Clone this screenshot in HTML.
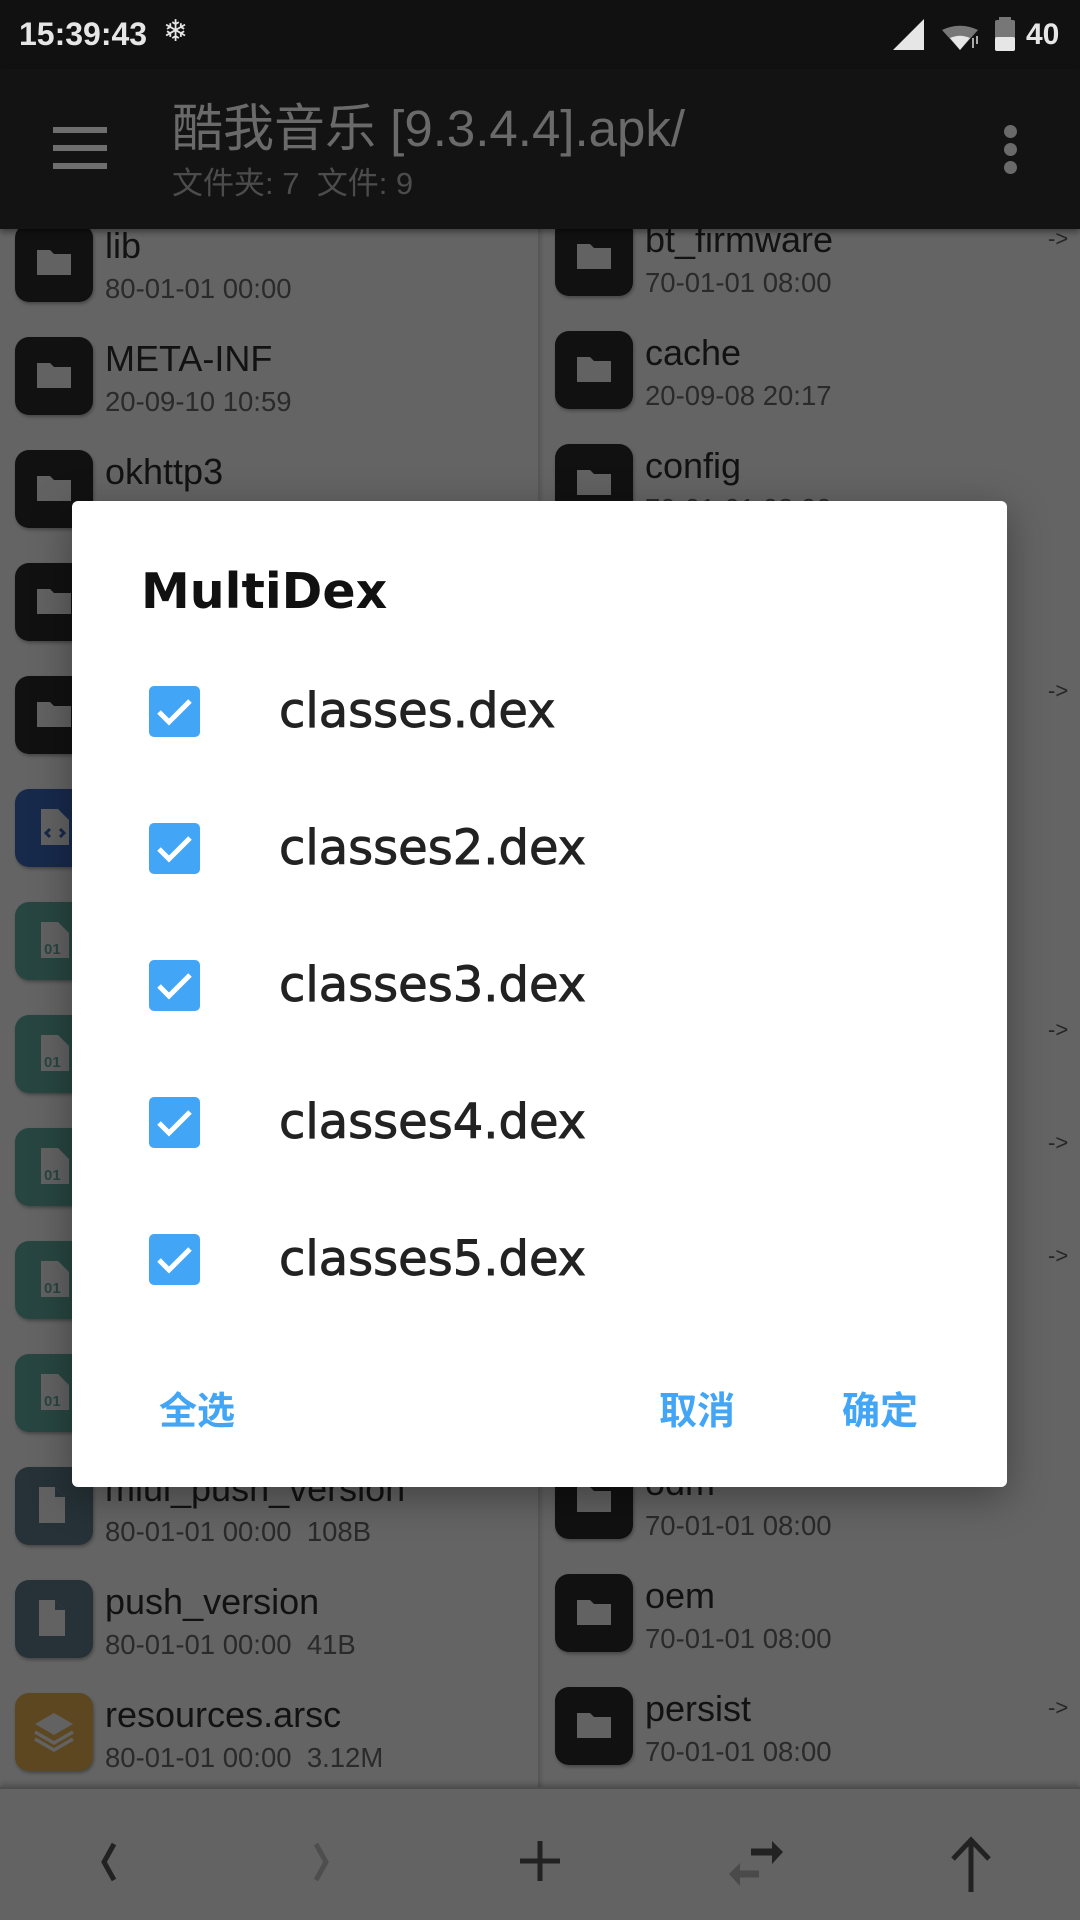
<!DOCTYPE html>
<html><head><meta charset="utf-8"><style>
*{margin:0;padding:0;box-sizing:border-box}
body{width:1080px;height:1920px;overflow:hidden;background:#646464;font-family:"Liberation Sans","Noto Sans CJK SC",sans-serif;position:relative}
.abs{position:absolute}
.ic{position:absolute;width:78px;height:78px;border-radius:14px;box-shadow:1px 2px 3px rgba(0,0,0,.3)}
.ic svg{position:absolute;left:0;top:0}
.t{position:absolute;font-size:36px;line-height:40px;color:#121212;white-space:nowrap}
.d{position:absolute;font-size:27.5px;line-height:32px;color:#2a2a2a;white-space:nowrap}
.ar{position:absolute;left:1048px;font-size:22px;color:#262626}
.cb{position:absolute;left:149px;width:51px;height:51px;border-radius:5px;background:#42a5f5}
.lb{position:absolute;left:279px;font-family:"DejaVu Sans",sans-serif;font-size:48px;line-height:54px;color:#222;-webkit-text-stroke:0.9px #222}
.btn{position:absolute;top:1380px;font-size:38px;font-weight:bold;color:#42a5f5;font-family:"Liberation Sans","Noto Sans CJK SC",sans-serif}
</style></head><body>

<div class="abs" style="left:538px;top:229px;width:6px;height:1559px;background:linear-gradient(90deg,#555,#646464)"></div>

<!-- LEFT column -->
<div class="ic" style="left:15px;top:224px;background:#111"><svg width="78" height="78"><path d="M22 26h13l4 4h17v21H22z" fill="#626262"/></svg></div>
<div class="t" style="left:105px;top:226px">lib</div><div class="d" style="left:105px;top:273px">80-01-01 00:00</div>

<div class="ic" style="left:15px;top:337px;background:#111"><svg width="78" height="78"><path d="M22 26h13l4 4h17v21H22z" fill="#626262"/></svg></div>
<div class="t" style="left:105px;top:339px">META-INF</div><div class="d" style="left:105px;top:386px">20-09-10 10:59</div>

<div class="ic" style="left:15px;top:450px;background:#111"><svg width="78" height="78"><path d="M22 26h13l4 4h17v21H22z" fill="#626262"/></svg></div>
<div class="t" style="left:105px;top:452px">okhttp3</div>

<div class="ic" style="left:15px;top:563px;background:#111"><svg width="78" height="78"><path d="M22 26h13l4 4h17v21H22z" fill="#626262"/></svg></div>
<div class="ic" style="left:15px;top:676px;background:#111"><svg width="78" height="78"><path d="M22 26h13l4 4h17v21H22z" fill="#626262"/></svg></div>
<div class="ic" style="left:15px;top:789px;background:#172a4c"><svg width="78" height="78"><path d="M26 20h17l11 11v25H26z" fill="#626262"/><path d="M35 40l-4 4 4 4M45 40l4 4-4 4" stroke="#172a4c" stroke-width="3" fill="none"/></svg></div>
<div class="ic" style="left:15px;top:902px;background:#284641"><svg width="78" height="78"><path d="M26 20h17l11 11v25H26z" fill="#626262"/><text x="29" y="52" font-size="15" font-weight="bold" fill="#284641" font-family="Liberation Sans">01</text></svg></div>
<div class="ic" style="left:15px;top:1015px;background:#284641"><svg width="78" height="78"><path d="M26 20h17l11 11v25H26z" fill="#626262"/><text x="29" y="52" font-size="15" font-weight="bold" fill="#284641" font-family="Liberation Sans">01</text></svg></div>
<div class="ic" style="left:15px;top:1128px;background:#284641"><svg width="78" height="78"><path d="M26 20h17l11 11v25H26z" fill="#626262"/><text x="29" y="52" font-size="15" font-weight="bold" fill="#284641" font-family="Liberation Sans">01</text></svg></div>
<div class="ic" style="left:15px;top:1241px;background:#284641"><svg width="78" height="78"><path d="M26 20h17l11 11v25H26z" fill="#626262"/><text x="29" y="52" font-size="15" font-weight="bold" fill="#284641" font-family="Liberation Sans">01</text></svg></div>
<div class="ic" style="left:15px;top:1354px;background:#284641"><svg width="78" height="78"><path d="M26 20h17l11 11v25H26z" fill="#626262"/><text x="29" y="52" font-size="15" font-weight="bold" fill="#284641" font-family="Liberation Sans">01</text></svg></div>

<div class="ic" style="left:15px;top:1467px;background:#263238"><svg width="78" height="78"><path d="M24 20h16l10 10v26H24z" fill="#626262"/><path d="M40 20v10h10z" fill="#263238"/></svg></div>
<div class="t" style="left:105px;top:1469px">miui_push_version</div><div class="d" style="left:105px;top:1516px">80-01-01 00:00&nbsp; 108B</div>

<div class="ic" style="left:15px;top:1580px;background:#263238"><svg width="78" height="78"><path d="M24 20h16l10 10v26H24z" fill="#626262"/><path d="M40 20v10h10z" fill="#263238"/></svg></div>
<div class="t" style="left:105px;top:1582px">push_version</div><div class="d" style="left:105px;top:1629px">80-01-01 00:00&nbsp; 41B</div>

<div class="ic" style="left:15px;top:1693px;background:#5c4720"><svg width="78" height="78"><path d="M39 20l19 11-19 11-19-11z" fill="#626262"/><path d="M20 39l19 11 19-11M20 46l19 11 19-11" stroke="#626262" stroke-width="3.5" fill="none"/></svg></div>
<div class="t" style="left:105px;top:1695px">resources.arsc</div><div class="d" style="left:105px;top:1742px">80-01-01 00:00&nbsp; 3.12M</div>

<!-- RIGHT column -->
<div class="ic" style="left:555px;top:218px;background:#111"><svg width="78" height="78"><path d="M22 26h13l4 4h17v21H22z" fill="#626262"/></svg></div>
<div class="t" style="left:645px;top:220px">bt_firmware</div><div class="d" style="left:645px;top:267px">70-01-01 08:00</div><div class="ar" style="top:226px">-&gt;</div>

<div class="ic" style="left:555px;top:331px;background:#111"><svg width="78" height="78"><path d="M22 26h13l4 4h17v21H22z" fill="#626262"/></svg></div>
<div class="t" style="left:645px;top:333px">cache</div><div class="d" style="left:645px;top:380px">20-09-08 20:17</div>

<div class="ic" style="left:555px;top:444px;background:#111"><svg width="78" height="78"><path d="M22 26h13l4 4h17v21H22z" fill="#626262"/></svg></div>
<div class="t" style="left:645px;top:446px">config</div><div class="d" style="left:645px;top:493px">70-01-01 08:00</div>

<div class="ar" style="top:678px">-&gt;</div>
<div class="ar" style="top:1017px">-&gt;</div>
<div class="ar" style="top:1130px">-&gt;</div>
<div class="ar" style="top:1243px">-&gt;</div>

<div class="ic" style="left:555px;top:1461px;background:#111"><svg width="78" height="78"><path d="M22 26h13l4 4h17v21H22z" fill="#626262"/></svg></div>
<div class="t" style="left:645px;top:1463px">odm</div><div class="d" style="left:645px;top:1510px">70-01-01 08:00</div>

<div class="ic" style="left:555px;top:1574px;background:#111"><svg width="78" height="78"><path d="M22 26h13l4 4h17v21H22z" fill="#626262"/></svg></div>
<div class="t" style="left:645px;top:1576px">oem</div><div class="d" style="left:645px;top:1623px">70-01-01 08:00</div>

<div class="ic" style="left:555px;top:1687px;background:#111"><svg width="78" height="78"><path d="M22 26h13l4 4h17v21H22z" fill="#626262"/></svg></div>
<div class="t" style="left:645px;top:1689px">persist</div><div class="d" style="left:645px;top:1736px">70-01-01 08:00</div><div class="ar" style="top:1695px">-&gt;</div>

<!-- bottom bar -->
<div class="abs" style="left:0;top:1787px;width:1080px;height:133px;background:#636363;border-top:2px solid #4e4e4e;box-shadow:0 -3px 5px rgba(0,0,0,.2)"></div>
<svg class="abs" style="left:0;top:1787px" width="1080" height="133">
<path d="M114 57l-10 18 10 18" stroke="#222" stroke-width="5" fill="none"/>
<path d="M316 57l10 18-10 18" stroke="#4e4e4e" stroke-width="5" fill="none"/>
<path d="M540 54v40M520 74h40" stroke="#222" stroke-width="5" fill="none"/>
<path d="M751 65h23" stroke="#222" stroke-width="7"/><path d="M772 54l11 11-11 12z" fill="#222"/>
<path d="M759 87h-23" stroke="#4a4a4a" stroke-width="7"/><path d="M740 76l-11 11 11 12z" fill="#4a4a4a"/>
<path d="M971 53v52M953 72l18-19 18 19" stroke="#222" stroke-width="5" fill="none"/>
</svg>

<!-- status bar -->
<div class="abs" style="left:0;top:0;width:1080px;height:69px;background:#111"></div>
<div class="abs" style="left:19px;top:16px;font-size:32px;font-weight:bold;color:#e6e6e6">15:39:43</div>
<div class="abs" style="left:163px;top:14px;font-size:30px;color:#e6e6e6">❄</div>
<svg class="abs" style="left:880px;top:0" width="200" height="70">
<path d="M13 50L44 19v31z" fill="#e6e6e6"/>
<path d="M62 30a40 40 0 0 1 36 0L80 50z" fill="#777"/><path d="M70 38a24 24 0 0 1 20 0L80 50z" fill="#e6e6e6"/>
<path d="M93 38v10M97 44v-8" stroke="#aaa" stroke-width="2"/>
<rect x="115" y="20" width="20" height="31" rx="2" fill="#777"/><rect x="119" y="17" width="12" height="4" fill="#777"/><rect x="115" y="37" width="20" height="14" rx="2" fill="#e6e6e6"/>
<text x="146" y="44" font-size="30" font-weight="bold" fill="#e6e6e6" font-family="Liberation Sans">40</text>
</svg>

<!-- app bar -->
<div class="abs" style="left:0;top:69px;width:1080px;height:160px;background:#131313;box-shadow:0 3px 6px rgba(0,0,0,.4)"></div>
<div class="abs" style="left:53px;top:127px;width:54px;height:6px;background:#6e6e6e"></div>
<div class="abs" style="left:53px;top:145px;width:54px;height:6px;background:#6e6e6e"></div>
<div class="abs" style="left:53px;top:163px;width:54px;height:6px;background:#6e6e6e"></div>
<div class="abs" style="left:172px;top:100px;font-size:51px;line-height:58px;color:#6a6a6a;white-space:nowrap">酷我音乐 [9.3.4.4].apk/</div>
<div class="abs" style="left:172px;top:166px;font-size:31px;line-height:36px;color:#4c4c4c;white-space:nowrap">文件夹: 7&nbsp; 文件: 9</div>
<div class="abs" style="left:1004px;top:125px;width:13px;height:13px;border-radius:50%;background:#6a6a6a"></div>
<div class="abs" style="left:1004px;top:143px;width:13px;height:13px;border-radius:50%;background:#6a6a6a"></div>
<div class="abs" style="left:1004px;top:161px;width:13px;height:13px;border-radius:50%;background:#6a6a6a"></div>

<!-- dialog -->
<div class="abs" style="left:72px;top:501px;width:935px;height:986px;background:#fff;border-radius:6px;box-shadow:0 10px 40px rgba(0,0,0,.35)"></div>
<div class="abs" style="left:141px;top:563px;font-family:'DejaVu Sans',sans-serif;font-weight:bold;font-size:49px;line-height:58px;color:#111">MultiDex</div>

<div class="cb" style="top:686px"><svg width="51" height="51"><path d="M10 26l10 10 21-21" stroke="#fff" stroke-width="5" fill="none"/></svg></div>
<div class="lb" style="top:684px">classes.dex</div>
<div class="cb" style="top:823px"><svg width="51" height="51"><path d="M10 26l10 10 21-21" stroke="#fff" stroke-width="5" fill="none"/></svg></div>
<div class="lb" style="top:821px">classes2.dex</div>
<div class="cb" style="top:960px"><svg width="51" height="51"><path d="M10 26l10 10 21-21" stroke="#fff" stroke-width="5" fill="none"/></svg></div>
<div class="lb" style="top:958px">classes3.dex</div>
<div class="cb" style="top:1097px"><svg width="51" height="51"><path d="M10 26l10 10 21-21" stroke="#fff" stroke-width="5" fill="none"/></svg></div>
<div class="lb" style="top:1095px">classes4.dex</div>
<div class="cb" style="top:1234px"><svg width="51" height="51"><path d="M10 26l10 10 21-21" stroke="#fff" stroke-width="5" fill="none"/></svg></div>
<div class="lb" style="top:1232px">classes5.dex</div>

<div class="btn" style="left:159px">全选</div>
<div class="btn" style="left:659px">取消</div>
<div class="btn" style="left:842px">确定</div>
</body></html>
